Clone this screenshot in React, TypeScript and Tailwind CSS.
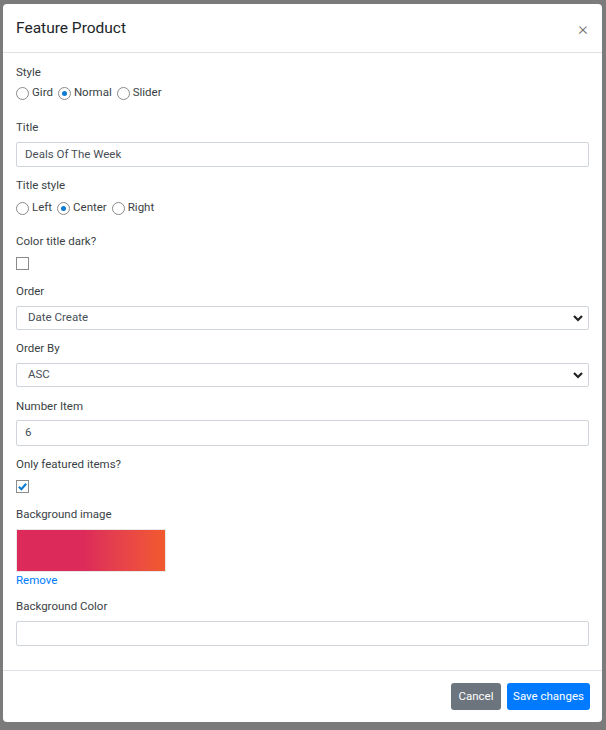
import React from 'react';

const font = { fontFamily: 'Roboto, "Open Sans", sans-serif' };

const Radio = ({ label, checked }: { label: string; checked?: boolean }) => (
  <label className="flex items-center gap-[3px] mr-[5px]">
    <span className="w-[13px] h-[13px] rounded-full border border-[#8a8a8a] bg-white flex items-center justify-center">
      {checked && <span className="w-[5px] h-[5px] rounded-full bg-[#0f7bd0]"></span>}
    </span>
    <span>{label}</span>
  </label>
);

const Checkbox = ({ checked }: { checked?: boolean }) => (
  <span className="w-[13px] h-[13px] border border-[#8a8a8a] bg-white flex items-center justify-center">
    {checked && (
      <svg width="11" height="11" viewBox="0 0 12 12">
        <path d="M2 6.2 L4.8 9 L10 3" fill="none" stroke="#0f7bd0" strokeWidth="2.2" />
      </svg>
    )}
  </span>
);

const Select = ({ value }: { value: string }) => (
  <div className="h-[24px] border border-[#ced4da] rounded-[2px] bg-white flex items-center justify-between pl-[11px] pr-[4px] text-[#495057]">
    <span>{value}</span>
    <svg width="12" height="12" viewBox="0 0 12 12">
      <path d="M2 4 L6 8 L10 4" fill="none" stroke="#222" strokeWidth="2.2" />
    </svg>
  </div>
);

const Label = ({ children, className = '' }: { children: React.ReactNode; className?: string }) => (
  <div className={`leading-[18px] text-[#3a3f45] ${className}`}>{children}</div>
);

export default function App() {
  return (
    <div className="w-[606px] h-[730px] bg-[#7b7b7b] pt-[4px] pl-[3px]" style={font}>
      <div className="w-[599px] h-[718px] bg-white rounded-[4px] flex flex-col text-[11.5px] text-[#3a3f45]">
        {/* Header */}
        <div className="h-[49px] border-b border-[#dee2e6] flex items-center justify-between pl-[13px] pr-[14px]">
          <h5 className="text-[15.5px] text-[#212529] leading-none mt-[1px]">Feature Product</h5>
          <span className="text-[19px] leading-none text-[#6c6c6c] font-light">×</span>
        </div>

        {/* Body */}
        <div className="flex-1 px-[13px] pt-[10px]">
          <Label>Style</Label>
          <div className="flex items-center h-[18px] mt-[3px]">
            <Radio label="Gird" />
            <Radio label="Normal" checked />
            <Radio label="Slider" />
          </div>

          <Label className="mt-[16px]">Title</Label>
          <div className="mt-[6px] h-[25px] border border-[#ced4da] rounded-[2px] flex items-center pl-[8px] text-[#495057]">
            Deals Of The Week
          </div>

          <Label className="mt-[9px]">Title style</Label>
          <div className="flex items-center h-[18px] mt-[5px]">
            <Radio label="Left" />
            <Radio label="Center" checked />
            <Radio label="Right" />
          </div>

          <Label className="mt-[15px]">Color title dark?</Label>
          <div className="mt-[7px]">
            <Checkbox />
          </div>

          <Label className="mt-[12px]">Order</Label>
          <div className="mt-[6px]">
            <Select value="Date Create" />
          </div>

          <Label className="mt-[9px]">Order By</Label>
          <div className="mt-[6px]">
            <Select value="ASC" />
          </div>

          <Label className="mt-[10px]">Number Item</Label>
          <div className="mt-[5px] h-[26px] border border-[#ced4da] rounded-[2px] flex items-center pl-[8px] text-[#495057]">
            6
          </div>

          <Label className="mt-[9px]">Only featured items?</Label>
          <div className="mt-[7px]">
            <Checkbox checked />
          </div>

          <Label className="mt-[12px]">Background image</Label>
          <div className="mt-[6px] w-[150px] h-[43px] border border-[#e8e8e8] bg-linear-to-r from-[#dc2a5a] from-45% to-[#f2592c]"></div>
          <div className="leading-[16px] text-[#007bff]">Remove</div>

          <Label className="mt-[9px]">Background Color</Label>
          <div className="mt-[6px] h-[25px] border border-[#ced4da] rounded-[2px]"></div>
        </div>

        {/* Footer */}
        <div className="h-[52px] border-t border-[#dee2e6] flex items-start justify-end gap-[6px] pt-[12px] pr-[12px]">
          <button className="h-[27px] w-[50px] rounded-[3px] bg-[#6c757d] text-white text-[11.5px]">Cancel</button>
          <button className="h-[27px] w-[83px] rounded-[3px] bg-[#007bff] text-white text-[11.5px]">Save changes</button>
        </div>
      </div>
    </div>
  );
}
